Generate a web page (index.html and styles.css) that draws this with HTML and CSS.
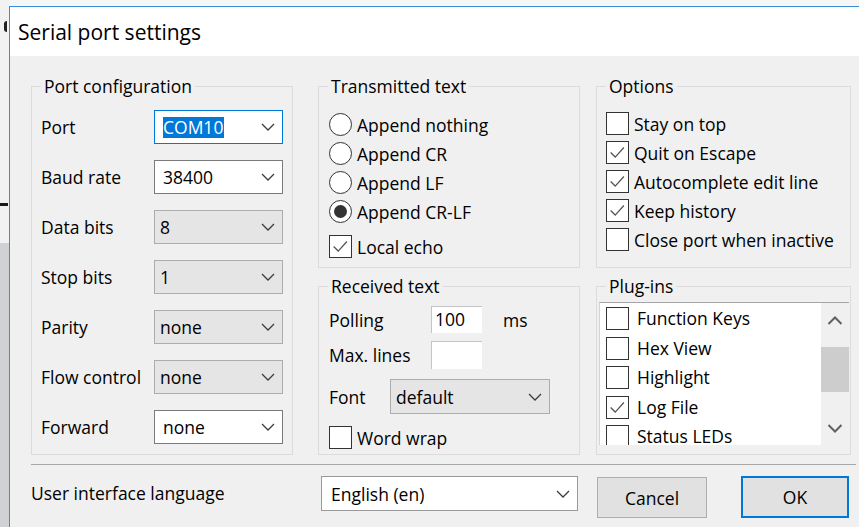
FILE: index.html
```html
<!DOCTYPE html>
<html lang="en">
<head>
<meta charset="utf-8">
<title>Serial port settings</title>
<link rel="stylesheet" href="styles.css">
</head>
<body>
<div class="desk">
  <div class="desk-edge">
    <span class="edge-mark"></span>
    <span class="edge-dash"></span>
    <span class="edge-low"></span>
  </div>

  <div class="window">
    <div class="titlebar">Serial port settings</div>

    <div class="client">
      <div class="groups">

        <!-- Port configuration -->
        <section class="group port">
          <div class="legend">Port configuration</div>
          <div class="form-grid">
            <span class="lbl">Port</span>
            <div class="combo focus"><span class="sel">COM10</span>
              <svg class="chev" viewBox="0 0 14 8"><path d="M1 1 L7 7 L13 1"/></svg></div>

            <span class="lbl">Baud rate</span>
            <div class="combo"><span>38400</span>
              <svg class="chev" viewBox="0 0 14 8"><path d="M1 1 L7 7 L13 1"/></svg></div>

            <span class="lbl">Data bits</span>
            <div class="combo fixed"><span>8</span>
              <svg class="chev" viewBox="0 0 14 8"><path d="M1 1 L7 7 L13 1"/></svg></div>

            <span class="lbl">Stop bits</span>
            <div class="combo fixed"><span>1</span>
              <svg class="chev" viewBox="0 0 14 8"><path d="M1 1 L7 7 L13 1"/></svg></div>

            <span class="lbl">Parity</span>
            <div class="combo fixed"><span>none</span>
              <svg class="chev" viewBox="0 0 14 8"><path d="M1 1 L7 7 L13 1"/></svg></div>

            <span class="lbl">Flow control</span>
            <div class="combo fixed"><span>none</span>
              <svg class="chev" viewBox="0 0 14 8"><path d="M1 1 L7 7 L13 1"/></svg></div>

            <span class="lbl">Forward</span>
            <div class="combo"><span>none</span>
              <svg class="chev" viewBox="0 0 14 8"><path d="M1 1 L7 7 L13 1"/></svg></div>
          </div>
        </section>

        <!-- Transmitted text -->
        <section class="group tx">
          <div class="legend">Transmitted text</div>
          <div class="choices">
            <label class="choice"><span class="radio"></span>Append nothing</label>
            <label class="choice"><span class="radio"></span>Append CR</label>
            <label class="choice"><span class="radio"></span>Append LF</label>
            <label class="choice"><span class="radio on"></span>Append CR-LF</label>
            <label class="choice echo"><span class="check">
              <svg viewBox="0 0 23 23"><path d="M4 11.5 L9 16.5 L18.5 6"/></svg></span>Local echo</label>
          </div>
        </section>

        <!-- Options -->
        <section class="group opts">
          <div class="legend">Options</div>
          <div class="choices opt-list">
            <label class="choice"><span class="check"></span>Stay on top</label>
            <label class="choice"><span class="check">
              <svg viewBox="0 0 23 23"><path d="M4 11.5 L9 16.5 L18.5 6"/></svg></span>Quit on Escape</label>
            <label class="choice"><span class="check">
              <svg viewBox="0 0 23 23"><path d="M4 11.5 L9 16.5 L18.5 6"/></svg></span>Autocomplete edit line</label>
            <label class="choice"><span class="check">
              <svg viewBox="0 0 23 23"><path d="M4 11.5 L9 16.5 L18.5 6"/></svg></span>Keep history</label>
            <label class="choice"><span class="check"></span>Close port when inactive</label>
          </div>
        </section>

        <!-- Received text -->
        <section class="group rx">
          <div class="legend">Received text</div>
          <div class="rx-row polling">
            <span class="rx-lbl">Polling</span>
            <span class="edit">100</span>
            <span class="unit">ms</span>
          </div>
          <div class="rx-row maxlines">
            <span class="rx-lbl">Max. lines</span>
            <span class="edit tall"></span>
          </div>
          <div class="rx-row fontrow">
            <span class="rx-lbl short">Font</span>
            <div class="combo fixed font-combo"><span>default</span>
              <svg class="chev" viewBox="0 0 14 8"><path d="M1 1 L7 7 L13 1"/></svg></div>
          </div>
          <label class="choice wrap"><span class="check"></span>Word wrap</label>
        </section>

        <!-- Plug-ins -->
        <section class="group plugins">
          <div class="legend">Plug-ins</div>
          <div class="listbox">
            <ul class="items">
              <li class="item"><span class="check"></span>Function Keys</li>
              <li class="item"><span class="check"></span>Hex View</li>
              <li class="item"><span class="check"></span>Highlight</li>
              <li class="item"><span class="check">
                <svg viewBox="0 0 23 23"><path d="M4 11.5 L9 16.5 L18.5 6"/></svg></span>Log File</li>
              <li class="item last"><span class="check"></span>Status LEDs</li>
            </ul>
            <div class="scrollbar">
              <div class="sb-btn"><svg viewBox="0 0 16 9"><path d="M1.5 8 L8 1.5 L14.5 8"/></svg></div>
              <div class="sb-thumb"></div>
              <div class="sb-track"></div>
              <div class="sb-btn"><svg viewBox="0 0 16 9"><path d="M1.5 1 L8 7.5 L14.5 1"/></svg></div>
            </div>
          </div>
        </section>
      </div>

      <div class="sep"></div>

      <div class="footer">
        <span class="footer-lbl">User interface language</span>
        <div class="combo lang"><span>English (en)</span>
          <svg class="chev" viewBox="0 0 14 8"><path d="M1 1 L7 7 L13 1"/></svg></div>
        <button class="btn cancel" type="button">Cancel</button>
        <button class="btn ok" type="button">OK</button>
      </div>
    </div>
  </div>
</div>
</body>
</html>
```

FILE: styles.css
```css
* {
  box-sizing: border-box;
}

html,
body {
  margin: 0;
  height: 100%;
  overflow: hidden;
}

body {
  font-family: "Open Sans", "Noto Sans", sans-serif;
  font-size: 17.5px;
  color: #000;
  background: #f6f6f6;
}

/* desktop behind the dialog */
.desk {
  display: flex;
  height: 527px;
}

.desk-edge {
  flex: none;
  width: 9px;
  display: flex;
  flex-direction: column;
  background: #f2f2f2;
}

.edge-mark {
  width: 3px;
  height: 11px;
  margin: 21px 0 0 4px;
  border-radius: 3px 0 0 3px;
  background: #222;
}

.edge-dash {
  width: 8px;
  height: 3px;
  margin-top: 171px;
  background: #1a1a1a;
}

.edge-low {
  flex: 1;
  margin-top: 37px;
  background: #cfd1d4;
}

/* dialog window */
.window {
  flex: none;
  width: 860px;
  margin-top: 6px;
  border-top: 1px solid #3a8ed8;
  border-left: 1px solid #3a8ed8;
  background: #f0f0f0;
}

.titlebar {
  height: 49px;
  display: flex;
  align-items: center;
  padding-left: 8px;
  background: #fff;
  font-size: 21px;
}

.client {
  padding: 30px 0 0 21px;
}

.groups {
  display: grid;
  grid-template-columns: 262px 25px 262px 16px 255px;
  grid-template-rows: 182px 169px;
  row-gap: 18px;
}

.group {
  display: flex;
  flex-direction: column;
  border: 1px solid #dcdcdc;
}

.port {
  grid-column: 1;
  grid-row: 1 / span 2;
}

.tx {
  grid-column: 3;
  grid-row: 1;
}

.opts {
  grid-column: 5;
  grid-row: 1;
}

.rx {
  grid-column: 3;
  grid-row: 2;
}

.plugins {
  grid-column: 5;
  grid-row: 2;
}

.legend {
  align-self: flex-start;
  height: 22px;
  margin: -12px 0 0 9px;
  padding: 0 3px;
  line-height: 22px;
  background: #f0f0f0;
}

/* port configuration form */
.form-grid {
  display: grid;
  grid-template-columns: 113px 129px;
  grid-auto-rows: 34px;
  row-gap: 16px;
  align-items: center;
  margin: 13px 0 0 9px;
}

.lbl {
  white-space: nowrap;
}

.combo {
  height: 34px;
  display: flex;
  align-items: center;
  justify-content: space-between;
  padding: 0 7px 0 8px;
  border: 1px solid #7a7a7a;
  background: #fff;
  white-space: nowrap;
}

.combo.focus {
  border-color: #0078d7;
}

.combo.fixed {
  padding-left: 5px;
  border-color: #adadad;
  background: #e5e5e5;
}

.sel {
  line-height: 21px;
  padding-right: 1px;
  background: #0078d7;
  color: #fff;
}

.chev {
  width: 14px;
  height: 8px;
  flex: none;
  fill: none;
  stroke: #3c3c3c;
  stroke-width: 1.3;
}

/* radio buttons and check boxes */
.choices {
  display: flex;
  flex-direction: column;
  margin: 13px 0 0 10px;
}

.opt-list {
  margin: 12px 0 0 9px;
}

.choice {
  height: 29px;
  display: flex;
  align-items: center;
  gap: 5px;
  white-space: nowrap;
}

.choice.echo {
  margin-top: 6px;
}

.radio {
  flex: none;
  width: 23px;
  height: 23px;
  display: flex;
  align-items: center;
  justify-content: center;
  border: 1px solid #333;
  border-radius: 50%;
  background: #fff;
}

.radio.on::after {
  content: "";
  width: 13px;
  height: 13px;
  border-radius: 50%;
  background: #333;
}

.check {
  flex: none;
  width: 23px;
  height: 23px;
  border: 1px solid #333;
  background: #fff;
}

.check svg {
  display: block;
  width: 21px;
  height: 21px;
  fill: none;
  stroke: #555;
  stroke-width: 1.4;
}

/* received text */
.rx-row {
  display: flex;
  align-items: center;
  margin-left: 10px;
}

.rx-lbl {
  width: 102px;
  white-space: nowrap;
}

.rx-lbl.short {
  width: 61px;
}

.polling {
  margin-top: 9px;
}

.maxlines {
  margin-top: 8px;
}

.fontrow {
  margin-top: 10px;
}

.edit {
  width: 51px;
  height: 27px;
  padding-left: 3px;
  line-height: 25px;
  border-top: 1px solid #c4c4c4;
  border-left: 1px solid #c4c4c4;
  background: #fff;
}

.edit.tall {
  height: 28px;
}

.unit {
  margin-left: 21px;
}

.font-combo {
  width: 160px;
  height: 35px;
  padding-left: 6px;
}

.choice.wrap {
  height: 23px;
  margin: 12px 0 0 10px;
}

.listbox {
  width: 250px;
  height: 143px;
  margin: 5px 0 0 2px;
  display: flex;
  overflow: hidden;
  border-top: 1px solid #a5a5a5;
  border-left: 1px solid #d4d4d4;
  background: #fff;
}

.items {
  flex: 1;
  margin: 0;
  padding: 4px 0 0 6px;
  list-style: none;
}

.item {
  height: 29.5px;
  display: flex;
  align-items: flex-start;
  gap: 8px;
  line-height: 23px;
  white-space: nowrap;
}

.item.last {
  height: 20px;
  overflow: hidden;
}

.scrollbar {
  flex: none;
  width: 28px;
  display: flex;
  flex-direction: column;
  background: #f0f0f0;
}

.sb-btn {
  height: 34px;
  display: flex;
  align-items: center;
  justify-content: center;
}

.sb-btn svg {
  width: 16px;
  height: 9px;
  fill: none;
  stroke: #606060;
  stroke-width: 2;
}

.sb-thumb {
  height: 45px;
  margin-top: 10px;
  background: #cdcdcd;
}

.sb-track {
  flex: 1;
}

/* bottom bar */
.sep {
  width: 825px;
  height: 1px;
  margin-top: 9px;
  background: #a7a7a7;
}

.footer {
  display: flex;
  align-items: flex-start;
}

.footer-lbl {
  width: 290px;
  margin-top: 11px;
  line-height: 35px;
  white-space: nowrap;
}

.combo.lang {
  width: 257px;
  height: 35px;
  margin-top: 11px;
  padding-left: 9px;
  border-color: #9a9a9a;
}

.btn {
  font: inherit;
  color: #000;
  background: #e1e1e1;
  padding: 0;
}

.cancel {
  width: 110px;
  height: 41px;
  margin: 12px 0 0 19px;
  border: 1px solid #adadad;
}

.ok {
  width: 108px;
  height: 42px;
  margin: 11px 0 0 34px;
  border: 2px solid #0078d7;
}
```
